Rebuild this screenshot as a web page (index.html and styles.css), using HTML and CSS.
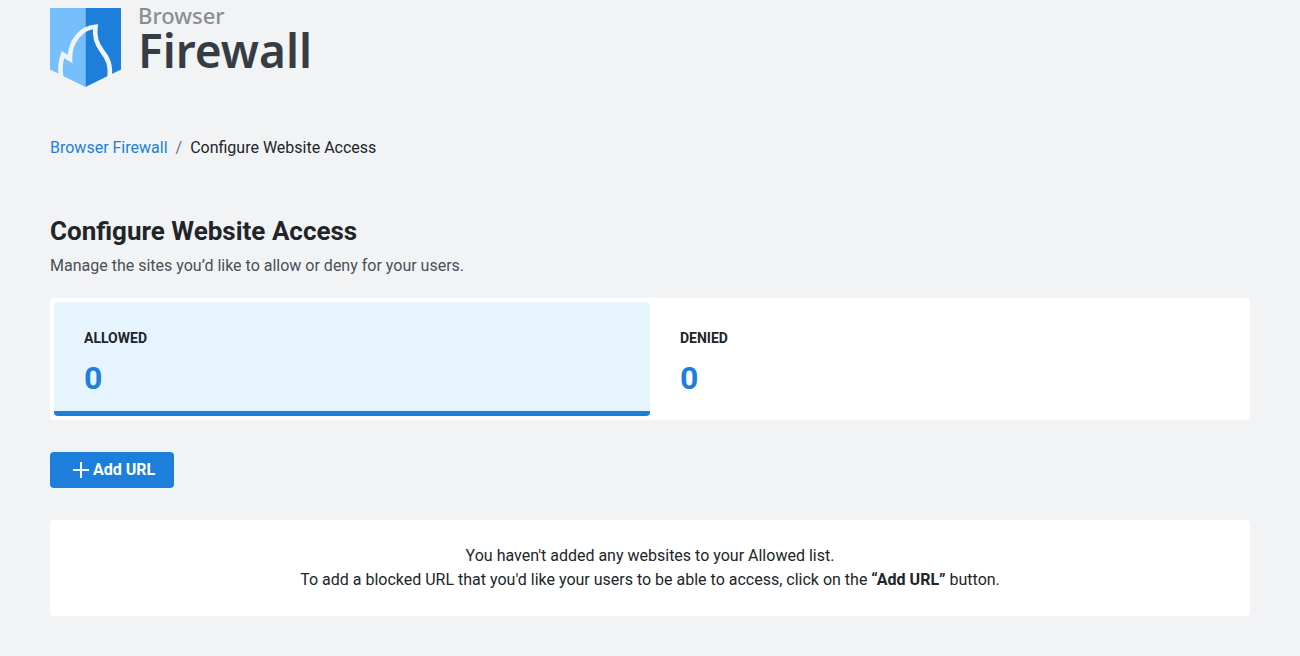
FILE: index.html
```html
<!DOCTYPE html>
<html lang="en">
<head>
    <meta charset="UTF-8">
    <meta name="viewport" content="width=device-width, initial-scale=1.0">
    <title>Configure Website Access - Browser Firewall</title>
    <link rel="stylesheet" href="styles.css">
</head>
<body>
    <div class="page">
        <header class="logo">
            <svg class="logo-mark" width="71" height="79" viewBox="0 0 71 79" aria-hidden="true">
                <path fill="#74bffc" d="M0 0H35.5V79L0 61.5Z"/>
                <path fill="#1d7fdb" d="M35.500 0H71V61.5L35.5 79Z"/>
                <path fill="none" stroke="#f1f3f5" stroke-width="4.600" d="M11.300 70C9.500 60 10.500 53 13 46.500L20 51C19.500 34 31 19.500 45.500 18.700C44 29 46.500 36 52 43C58 50.500 61 57 59.500 70"/>
            </svg>
            <div class="logo-text">
                <span class="logo-small">Browser</span>
                <span class="logo-big">Firewall</span>
            </div>
        </header>

        <nav class="breadcrumb" aria-label="Breadcrumb">
            <a href="#">Browser Firewall</a>
            <span class="separator">/</span>
            <span>Configure Website Access</span>
        </nav>

        <main>
            <h1>Configure Website Access</h1>
            <p class="subtitle">Manage the sites you’d like to allow or deny for your users.</p>

            <div class="tabs" role="tablist">
                <button class="tab active" role="tab" aria-selected="true">
                    <span class="tab-label">Allowed</span>
                    <span class="tab-count">0</span>
                </button>
                <button class="tab" role="tab" aria-selected="false">
                    <span class="tab-label">Denied</span>
                    <span class="tab-count">0</span>
                </button>
            </div>

            <button class="add-button">
                <svg width="16" height="16" viewBox="0 0 16 16" aria-hidden="true">
                    <path fill="none" stroke="currentColor" stroke-width="2" d="M8 0V16M0 8H16"/>
                </svg>
                <span>Add URL</span>
            </button>

            <div class="empty">
                <p>You haven't added any websites to your Allowed list.</p>
                <p>To add a blocked URL that you'd like your users to be able to access, click on the <strong>“Add URL”</strong> button.</p>
            </div>
        </main>
    </div>
</body>
</html>
```
FILE: styles.css
```css
* {
    margin: 0;
    padding: 0;
    box-sizing: border-box;
}

body {
    font-family: Roboto, "Liberation Sans", sans-serif;
    font-size: 16px;
    line-height: 24px;
    color: #212529;
    background: #f1f3f5;
}

button {
    font-family: inherit;
    border: none;
    cursor: pointer;
}

.page {
    padding: 8px 50px 40px;
}

/* Logo */
.logo {
    display: flex;
    gap: 17px;
    height: 79px;
}

.logo-text {
    display: flex;
    flex-direction: column;
    font-family: "Noto Sans", sans-serif;
}

.logo-small {
    font-size: 22px;
    line-height: 14px;
    font-weight: 500;
    color: #8b8e91;
}

.logo-big {
    font-size: 46px;
    line-height: 56px;
    font-weight: 600;
    color: #363c44;
}

/* Breadcrumb */
.breadcrumb {
    display: flex;
    gap: 8px;
    margin-top: 49px;
}

.breadcrumb a {
    color: #1d7fdb;
    text-decoration: none;
}

.separator {
    color: #6c757d;
}

h1 {
    margin-top: 55px;
    font-size: 26px;
    line-height: 32px;
    font-weight: 700;
}

.subtitle {
    margin-top: 7px;
    color: #495057;
}

/* Allowed / denied tabs */
.tabs {
    display: flex;
    margin-top: 20px;
    padding: 4px;
    background: #fff;
    border-radius: 4px;
}

.tab {
    display: flex;
    flex: 1;
    flex-direction: column;
    padding: 24px 30px 13px;
    text-align: left;
    color: #212529;
    background: #fff;
    border-bottom: 5px solid transparent;
    border-radius: 4px;
}

.tab.active {
    background: #e6f4fe;
    border-bottom-color: #1d7fdb;
}

.tab-label {
    font-size: 14px;
    line-height: 24px;
    font-weight: 700;
    text-transform: uppercase;
}

.tab-count {
    margin-top: 8px;
    font-size: 32px;
    line-height: 40px;
    font-weight: 700;
    color: #1d7fdb;
}

.add-button {
    display: flex;
    align-items: center;
    gap: 4px;
    height: 36px;
    margin-top: 32px;
    padding: 0 19px 0 23px;
    font-size: 16px;
    font-weight: 700;
    color: #fff;
    background: #1d7fdb;
    border-radius: 4px;
}

.add-button span {
    padding-bottom: 2px;
}

.empty {
    margin-top: 32px;
    padding: 24px;
    text-align: center;
    background: #fff;
    border-radius: 4px;
}
```
